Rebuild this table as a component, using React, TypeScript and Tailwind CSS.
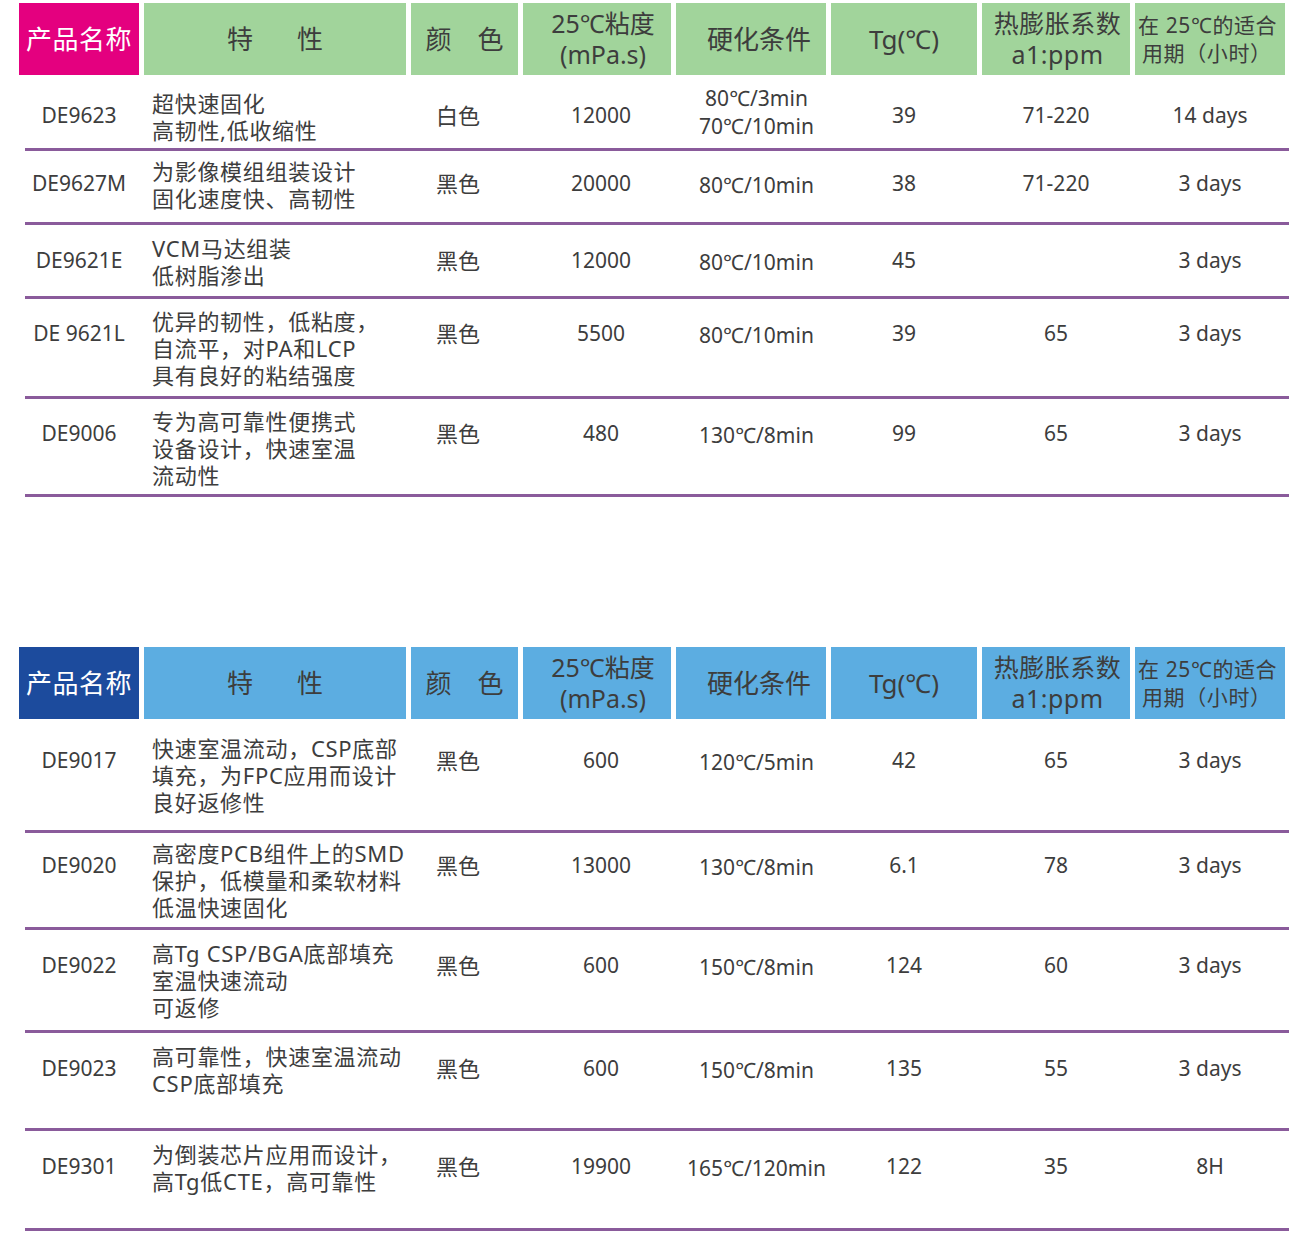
import React from "react";

type Row = {
  name: string;
  desc: string[];
  color: string;
  visc: string;
  cure: string[];
  tg: string;
  cte: string;
  life: string;
  h: string;
  pt: string;
};

const cols =
  "grid grid-cols-[120px_262px_107px_148px_150px_146px_148px_150px] gap-x-[5px]";

const topRows: Row[] = [
  { name: "DE9623", desc: ["超快速固化", "高韧性,低收缩性"], color: "白色", visc: "12000", cure: ["80℃/3min", "70℃/10min"], tg: "39", cte: "71-220", life: "14 days", h: "h-[73px]", pt: "pt-[15px]" },
  { name: "DE9627M", desc: ["为影像模组组装设计", "固化速度快、高韧性"], color: "黑色", visc: "20000", cure: ["80℃/10min"], tg: "38", cte: "71-220", life: "3 days", h: "h-[71px]", pt: "pt-[7px]" },
  { name: "DE9621E", desc: ["VCM马达组装", "低树脂渗出"], color: "黑色", visc: "12000", cure: ["80℃/10min"], tg: "45", cte: "", life: "3 days", h: "h-[71px]", pt: "pt-[10px]" },
  { name: "DE 9621L", desc: ["优异的韧性，低粘度，", "自流平，对PA和LCP", "具有良好的粘结强度"], color: "黑色", visc: "5500", cure: ["80℃/10min"], tg: "39", cte: "65", life: "3 days", h: "h-[97px]", pt: "pt-[9px]" },
  { name: "DE9006", desc: ["专为高可靠性便携式", "设备设计，快速室温", "流动性"], color: "黑色", visc: "480", cure: ["130℃/8min"], tg: "99", cte: "65", life: "3 days", h: "h-[95px]", pt: "pt-[9px]" },
];

const bottomRows: Row[] = [
  { name: "DE9017", desc: ["快速室温流动，CSP底部", "填充，为FPC应用而设计", "良好返修性"], color: "黑色", visc: "600", cure: ["120℃/5min"], tg: "42", cte: "65", life: "3 days", h: "h-[111px]", pt: "pt-[16px]" },
  { name: "DE9020", desc: ["高密度PCB组件上的SMD", "保护，低模量和柔软材料", "低温快速固化"], color: "黑色", visc: "13000", cure: ["130℃/8min"], tg: "6.1", cte: "78", life: "3 days", h: "h-[94px]", pt: "pt-[7px]" },
  { name: "DE9022", desc: ["高Tg CSP/BGA底部填充", "室温快速流动", "可返修"], color: "黑色", visc: "600", cure: ["150℃/8min"], tg: "124", cte: "60", life: "3 days", h: "h-[100px]", pt: "pt-[10px]" },
  { name: "DE9023", desc: ["高可靠性，快速室温流动", "CSP底部填充"], color: "黑色", visc: "600", cure: ["150℃/8min"], tg: "135", cte: "55", life: "3 days", h: "h-[95px]", pt: "pt-[10px]" },
  { name: "DE9301", desc: ["为倒装芯片应用而设计，", "高Tg低CTE，高可靠性"], color: "黑色", visc: "19900", cure: ["165℃/120min"], tg: "122", cte: "35", life: "8H", h: "h-[97px]", pt: "pt-[10px]" },
];

function Header({ first, rest }: { first: string; rest: string }) {
  const cell = `${rest} flex flex-col items-center justify-center text-[#3d3d3d] leading-[31px] text-[25px]`;
  return (
    <div className={`${cols} h-[72px]`}>
      <div className={`${first} flex items-center justify-center text-white text-[26px] tracking-[0.5px]`}>
        产品名称
      </div>
      <div className={`${cell} flex-row gap-[44px] text-[26px]`}>
        <span>特</span>
        <span>性</span>
      </div>
      <div className={`${cell} flex-row gap-[26px] text-[26px]`}>
        <span>颜</span>
        <span>色</span>
      </div>
      <div className={`${cell} pl-[12px]`}>
        <span>25℃粘度</span>
        <span>(mPa.s)</span>
      </div>
      <div className={`${cell} pl-[16px] text-[26px]`}>硬化条件</div>
      <div className={`${cell} text-[26px]`}>Tg(℃)</div>
      <div className={`${cell} pl-[3px] tracking-[0.5px]`}>
        <span>热膨胀系数</span>
        <span>a1:ppm</span>
      </div>
      <div className={`${rest} flex flex-col justify-center pl-[3px] text-[#3d3d3d] text-[21px] leading-[28px] tracking-[0.6px]`}>
        <span className="whitespace-nowrap">在 25℃的适合</span>
        <span className="pl-[4px] whitespace-nowrap">用期（小时）</span>
      </div>
    </div>
  );
}

function DataRow({ r }: { r: Row }) {
  const twoCure = r.cure.length > 1;
  return (
    <>
      <div className={`${cols} ${r.h} ${r.pt} items-start text-[#3d3d3d] text-[21px]`}>
        <div className="mt-[12px] text-center leading-[27px] whitespace-nowrap">{r.name}</div>
        <div className="pl-[8px] flex flex-col text-[22px] leading-[27px] tracking-[0.7px]">
          {r.desc.map((d) => (
            <span key={d} className="whitespace-nowrap">
              {d}
            </span>
          ))}
        </div>
        <div className="mt-[12px] pl-[25px] text-[22px] leading-[27px]">{r.color}</div>
        <div className="mt-[12px] pl-[8px] text-center leading-[27px]">{r.visc}</div>
        <div
          className={`${twoCure ? "-mt-[6px] leading-[28px]" : "mt-[14px] leading-[27px]"} pl-[11px] flex flex-col items-center whitespace-nowrap`}
        >
          {r.cure.map((c) => (
            <span key={c}>{c}</span>
          ))}
        </div>
        <div className="mt-[12px] text-center leading-[27px]">{r.tg}</div>
        <div className="mt-[12px] text-center leading-[27px]">{r.cte}</div>
        <div className="mt-[12px] text-center leading-[27px]">{r.life}</div>
      </div>
      <div className="ml-[6px] w-[1264px] h-[3px] bg-[#8a5b9b]" />
    </>
  );
}

export default function App() {
  return (
    <div className="min-h-[1238px] bg-white pl-[19px] pt-[3px] font-['Noto_Sans','Noto_Sans_CJK_SC',sans-serif]">
      <div className="flex flex-col">
        <Header first="bg-[#e4007f]" rest="bg-[#a1d49b]" />
        {topRows.map((r) => (
          <DataRow key={r.name} r={r} />
        ))}
      </div>

      <div className="flex flex-col mt-[150px]">
        <Header first="bg-[#1c4b9d]" rest="bg-[#5cade1]" />
        {bottomRows.map((r) => (
          <DataRow key={r.name} r={r} />
        ))}
      </div>
    </div>
  );
}
